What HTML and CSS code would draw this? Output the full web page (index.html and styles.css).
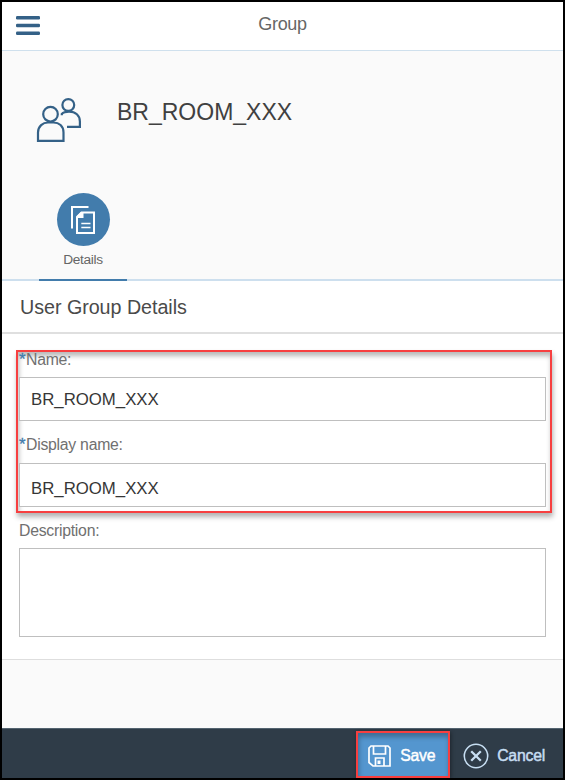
FILE: index.html
```html
<!DOCTYPE html>
<html lang="en">
<head>
<meta charset="utf-8">
<title>Group</title>
<link rel="stylesheet" href="styles.css">
</head>
<body>
<div class="app">
  <header class="bar">
    <svg class="menu" width="24" height="19" viewBox="0 0 24 19" fill="#346187"><rect y="0" width="24" height="3.4" rx="1.2"/><rect y="7.8" width="24" height="3.4" rx="1.2"/><rect y="15.5" width="24" height="3.4" rx="1.2"/></svg>
    <h1 class="bar-title">Group</h1>
  </header>
  <section class="object">
    <div class="identity">
      <svg class="people" width="46" height="46" viewBox="0 0 46 46" fill="none" stroke="#346187" stroke-width="2.2"><circle cx="14.500" cy="17.200" r="7.300"/><path d="M2 43.800V35.500C2 29 7 25.500 12 25.500H17.500C23 25.500 27.500 29 27.500 35.500V43.800Z"/><circle cx="32.300" cy="8" r="5.900"/><path d="M25.800 18.200V16.900C27.500 15 30 14.600 33 14.600C39.500 14.600 43.900 18.500 43.900 24.500V29.800H31"/></svg>
      <h2 class="object-name">BR_ROOM_XXX</h2>
    </div>
    <nav class="tabs">
      <a class="tab">
        <span class="tab-circle"><svg width="26" height="30" viewBox="0 0 26 30" fill="none" stroke="#fff" stroke-width="2"><path d="M2 23.500V2H18.500"/><path d="M11.500 7.500H24V28H7V12Z"/><path d="M7 13V11L11 7H13.500V13Z" fill="#fff" stroke="none"/><path d="M11.300 18.500H20.500M11.300 22.500H20.500" stroke-width="1.700"/></svg></span>
        <span class="tab-label">Details</span>
      </a>
    </nav>
  </section>
  <h3 class="section-title">User Group Details</h3>
  <form class="form">
    <div class="required-fields">
      <label class="label"><span class="star">*</span>Name:</label>
      <div class="input">BR_ROOM_XXX</div>
      <label class="label label-display"><span class="star">*</span>Display name:</label>
      <div class="input input-display">BR_ROOM_XXX</div>
    </div>
    <label class="label label-description">Description:</label>
    <div class="textarea"></div>
  </form>
  <footer class="footer">
    <div class="button save">
      <svg width="23" height="22" viewBox="0 0 23 22" fill="none" stroke="#fff" stroke-width="1.700"><path d="M3 1H20L22 3V21H5L1 17.500V3Z"/><path d="M5.500 1V9H17.500V1M7.500 21V13H16V21"/><path d="M9.500 15.500H12.500V19H9.500Z" fill="#fff" stroke="none"/></svg>
      <span>Save</span>
    </div>
    <div class="button cancel">
      <svg width="26" height="26" viewBox="0 0 26 26" fill="none" stroke="#c7def2"><circle cx="13" cy="13" r="11.700" stroke-width="1.600"/><path d="M8.200 8.200L17.800 17.800M17.800 8.200L8.200 17.800" stroke-width="2.300"/></svg>
      <span>Cancel</span>
    </div>
  </footer>
</div>
</body>
</html>
```
FILE: styles.css
```css
* { box-sizing: border-box; }
body { margin: 0; font-family: "Liberation Sans", Arial, sans-serif; color: #666; }
h1, h2, h3 { margin: 0; font-weight: 400; }
svg { display: block; flex: none; }
.app { width: 565px; height: 780px; border: 2px solid #000; display: flex; flex-direction: column; background: #fafafa; overflow: hidden; }
.bar { height: 49px; flex: none; background: #fff; border-bottom: 1px solid #cfe0ed; display: grid; grid-template-columns: 38px 1fr 38px; align-items: center; padding-bottom: 3px; }
.menu { margin: 2px 0 0 14px; }
.bar-title { font-size: 18px; letter-spacing: -.35px; text-align: center; }
.object { height: 230px; flex: none; display: flex; flex-direction: column; justify-content: space-between; border-bottom: 2px solid #cddfee; }
.identity { display: flex; padding: 46px 0 0 34px; }
.object-name { font-size: 23px; line-height: 28px; color: #404040; margin: 1px 0 0 35px; }
.tabs { display: flex; margin: 0 0 -2px 37px; }
.tab { width: 88px; height: 88px; border-bottom: 2px solid #427cac; display: flex; flex-direction: column; align-items: center; }
.tab-circle { width: 53px; height: 53px; border-radius: 50%; background: #427cac; display: flex; align-items: center; justify-content: center; }
.tab-label { font-size: 13.7px; letter-spacing: -.3px; line-height: 16px; margin-top: 6px; }
.section-title { height: 53px; flex: none; background: #fff; border-bottom: 2px solid #dfdfdf; color: #4a4a4a; font-size: 19.7px; letter-spacing: -.03px; line-height: 52px; padding-left: 18px; }
.form { height: 326px; flex: none; background: #fff; border-bottom: 1px solid #dedede; padding: 16px 11px 0 14px; }
.required-fields { height: 163px; border: 2px solid #f73f40; padding: 0 4px 0 1px; box-shadow: 1px 4px 5px rgba(0,0,0,.3), inset 1px 4px 5px rgba(0,0,0,.28); }
.label { display: flex; height: 25px; font-size: 15.8px; letter-spacing: -.26px; line-height: 16px; color: #707070; }
.star { width: 7px; font-size: 17px; line-height: 16px; color: #427cac; -webkit-text-stroke: .3px currentColor; }
.input { height: 44px; border: 1px solid #bfbfbf; background: #fff; color: #363636; font-size: 16.8px; line-height: 43px; padding-left: 11px; }
.label-display { height: 42px; padding-top: 16px; }
.input-display { line-height: 49px; }
.label-description { height: 35px; padding: 10px 0 0 3px; }
.textarea { height: 89px; margin: 0 6px 0 3px; border: 1px solid #bfbfbf; }
.footer { height: 50px; flex: none; margin-top: auto; background: #2f3c48; border-top: 1px solid #53636f; display: flex; justify-content: flex-end; align-items: flex-end; padding-right: 18px; }
.button { display: flex; align-items: center; height: 47px; font-size: 15.8px; letter-spacing: -.22px; -webkit-text-stroke: .45px currentColor; }
.button span { padding-top: 2px; }
.button svg { margin-top: 2px; }
.save { width: 94px; border: 2px solid #f73f40; background: #5496cf; color: #fff; padding-left: 10px; gap: 9px; box-shadow: inset 1px 4px 5px rgba(0,0,0,.28), 1px 1px 4px rgba(0,0,0,.4); }
.cancel { color: #c7def2; margin-left: 13px; gap: 8px; }
```
